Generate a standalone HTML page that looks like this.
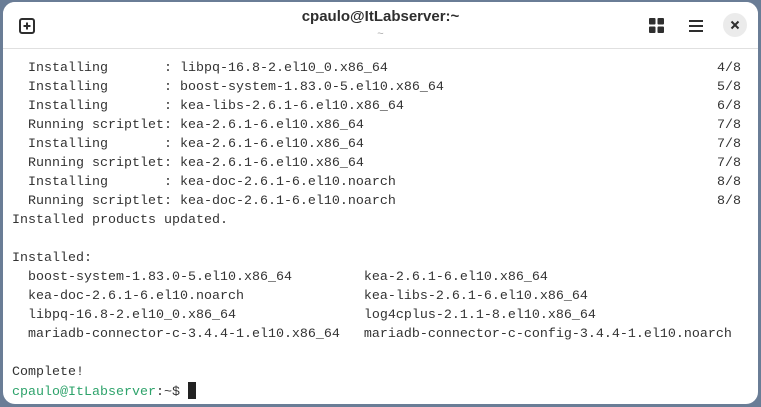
<!DOCTYPE html>
<html><head><style>
html,body{margin:0;padding:0;width:761px;height:407px;overflow:hidden;background:#6a7d96;}
.win{position:absolute;left:3px;top:2px;width:755px;height:402px;background:#fff;border-radius:12px;overflow:hidden;}
.hdr{position:absolute;left:0;top:0;width:755px;height:46px;border-bottom:1px solid #e0e0e0;background:#fff;}
.title{position:absolute;left:0;width:755px;top:6px;text-align:center;font:bold 15px "Liberation Sans",sans-serif;color:#2e2e2e;}
.sub{position:absolute;left:0;width:755px;top:26px;text-align:center;font:11px "Liberation Sans",sans-serif;color:#aaa;}
pre{position:absolute;left:9px;top:57px;margin:0;font:13.33px/19px "Liberation Mono",monospace;color:#333;}
.r{position:absolute;right:17px;font:13.33px/19px "Liberation Mono",monospace;color:#333;text-align:right;}
.g{color:#2ea36b;}
.cur{display:inline-block;width:8px;height:17px;background:#222;vertical-align:-4px;}
</style></head><body>
<div class="win">
<div class="hdr">
<svg style="position:absolute;left:16px;top:16px" width="16" height="16" viewBox="0 0 16 16"><rect x="1" y="1" width="14" height="14" rx="2" fill="none" stroke="#2e2e2e" stroke-width="2"/><path d="M8 4.5v7M4.5 8h7" stroke="#2e2e2e" stroke-width="2"/></svg>
<div class="title">cpaulo@ItLabserver:~</div>
<div class="sub">~</div>
<svg style="position:absolute;left:646px;top:16px" width="15" height="15" viewBox="0 0 15 15" fill="#2e2e2e"><rect x="0" y="0" width="6.5" height="6.5" rx="1"/><rect x="8.5" y="0" width="6.5" height="6.5" rx="1"/><rect x="0" y="8.5" width="6.5" height="6.5" rx="1"/><rect x="8.5" y="8.5" width="6.5" height="6.5" rx="1"/></svg>
<svg style="position:absolute;left:685px;top:17px" width="16" height="14" viewBox="0 0 16 14" fill="#2e2e2e"><rect x="1" y="1" width="14" height="2"/><rect x="1" y="6" width="14" height="2"/><rect x="1" y="11" width="14" height="2"/></svg>
<div style="position:absolute;left:720px;top:11px;width:24px;height:24px;border-radius:12px;background:#ebebeb"></div>
<svg style="position:absolute;left:727px;top:18px" width="10" height="10" viewBox="0 0 10 10"><path d="M1.5 1.5l7 7M8.5 1.5l-7 7" stroke="#2e2e2e" stroke-width="2"/></svg>
</div>
<pre>  Installing       : libpq-16.8-2.el10_0.x86_64
  Installing       : boost-system-1.83.0-5.el10.x86_64
  Installing       : kea-libs-2.6.1-6.el10.x86_64
  Running scriptlet: kea-2.6.1-6.el10.x86_64
  Installing       : kea-2.6.1-6.el10.x86_64
  Running scriptlet: kea-2.6.1-6.el10.x86_64
  Installing       : kea-doc-2.6.1-6.el10.noarch
  Running scriptlet: kea-doc-2.6.1-6.el10.noarch
Installed products updated.

Installed:
  boost-system-1.83.0-5.el10.x86_64         kea-2.6.1-6.el10.x86_64
  kea-doc-2.6.1-6.el10.noarch               kea-libs-2.6.1-6.el10.x86_64
  libpq-16.8-2.el10_0.x86_64                log4cplus-2.1.1-8.el10.x86_64
  mariadb-connector-c-3.4.4-1.el10.x86_64   mariadb-connector-c-config-3.4.4-1.el10.noarch

Complete!
<span class="g">cpaulo@ItLabserver</span>:~$ <span class="cur"></span></pre>
<div class="r" style="top:57px">4/8<br>5/8<br>6/8<br>7/8<br>7/8<br>7/8<br>8/8<br>8/8</div>
</div>
</body></html>
